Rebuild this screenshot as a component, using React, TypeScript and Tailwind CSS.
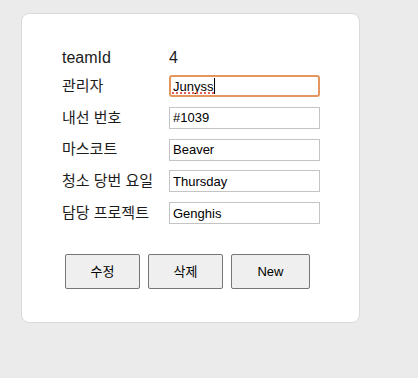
const fields = [
  { label: "관리자", value: "Junyss", focused: true },
  { label: "내선 번호", value: "#1039" },
  { label: "마스코트", value: "Beaver" },
  { label: "청소 당번 요일", value: "Thursday" },
  { label: "담당 프로젝트", value: "Genghis" },
];

const font = "font-['Liberation_Sans','Noto_Sans_CJK_KR',sans-serif]";

export default function App() {
  return (
    <div className={`min-h-[378px] w-full bg-[#ebebeb] pt-[13px] pl-[21px] ${font}`}>
      <div className="w-[339px] rounded-[8px] border border-[#dadada] bg-white pt-[33px] pb-[33px] pl-[40px]">
        {/* teamId row */}
        <div className="flex h-[22px] items-center text-[16px] text-[#1c1c1c]">
          <div className="w-[107px]">teamId</div>
          <div>4</div>
        </div>

        {/* editable rows */}
        <div className="mt-[6px] flex flex-col gap-[9.75px]">
          {fields.map((f) => (
            <div key={f.label} className="flex h-[22px] items-center">
              <div className="w-[107px] text-[15px] text-[#1c1c1c]">{f.label}</div>
              <div className="relative flex">
                <input
                  defaultValue={f.value}
                  className={
                    f.focused
                      ? `h-[22px] w-[151px] rounded-[3px] border-2 border-[#e3975f] px-[2px] text-[13px] text-black outline-none ${font}`
                      : `h-[22px] w-[151px] border border-[#c4c4c4] px-[3px] text-[13px] text-black outline-none ${font}`
                  }
                />
                {f.focused && (
                  <>
                    <span className="absolute left-[3px] top-[17px] w-[42px] border-b-2 border-dotted border-[#e06060]" />
                    <span className="absolute left-[45px] top-[3px] h-[16px] w-px bg-black" />
                  </>
                )}
              </div>
            </div>
          ))}
        </div>

        {/* actions */}
        <div className="mt-[30px] ml-[3px] flex gap-[8px]">
          <button className="h-[35px] w-[75px] rounded-[2px] border border-[#767676] bg-[#efefef] text-[13px] text-black">
            수정
          </button>
          <button className="h-[35px] w-[75px] rounded-[2px] border border-[#767676] bg-[#efefef] text-[13px] text-black">
            삭제
          </button>
          <button className="h-[35px] w-[79px] rounded-[2px] border border-[#767676] bg-[#efefef] text-[13px] text-black">
            New
          </button>
        </div>
      </div>
    </div>
  );
}
